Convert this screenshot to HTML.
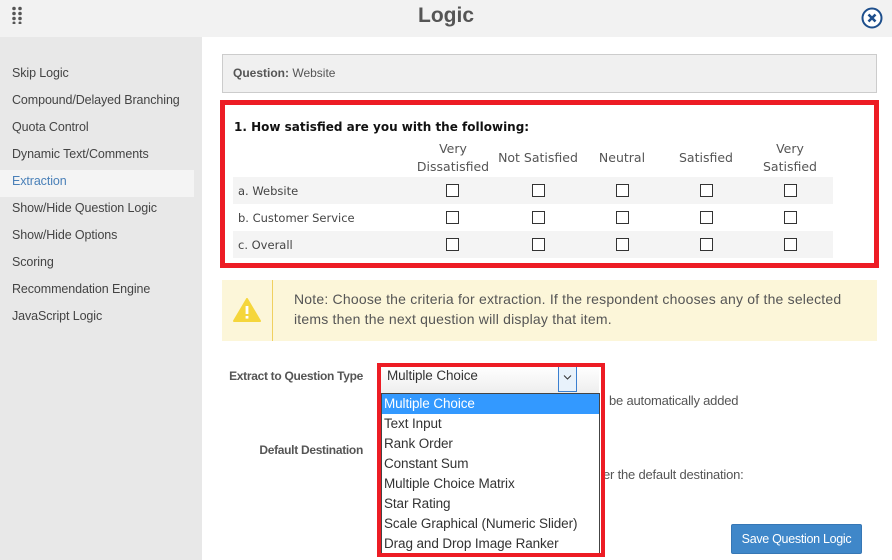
<!DOCTYPE html>
<html><head><meta charset="utf-8"><style>
*{margin:0;padding:0;box-sizing:border-box}
body{width:892px;height:560px;overflow:hidden;background:#fff;font-family:"Liberation Sans",sans-serif;color:#555;position:relative}
.a{position:absolute;white-space:nowrap}
.hdr{left:0;top:0;width:892px;height:37px;background:#f2f2f2}
.side{left:0;top:37px;width:202px;height:523px;background:#e8e8e8}
.si{left:12px;font-size:12.5px;color:#444;letter-spacing:-0.1px}
.cb{position:absolute;width:13px;height:13px;border:1px solid #333;background:#fff}
.row{position:absolute;left:233px;width:600px;height:27px}
.rl{position:absolute;left:5px;top:7px;color:#444;font-family:"DejaVu Sans",sans-serif;font-size:11.5px}
.ch{font-family:"DejaVu Sans",sans-serif;font-size:12.5px;color:#555;text-align:center;line-height:18px}
.opt{position:absolute;left:0;width:217px;height:20px;padding-left:2px;font-size:13.5px;color:#333;line-height:20px;letter-spacing:-0.1px}
</style></head><body>
<div class="a hdr"></div>
<svg class="a" style="left:11px;top:6px" width="12" height="18"><g fill="#555"><circle cx="3" cy="2.5" r="1.8"/><circle cx="9" cy="2.5" r="1.8"/><circle cx="3" cy="7.5" r="1.8"/><circle cx="9" cy="7.5" r="1.8"/><circle cx="3" cy="12.5" r="1.8"/><circle cx="9" cy="12.5" r="1.8"/><circle cx="3" cy="17" r="1.5"/><circle cx="9" cy="17" r="1.5"/></g></svg>
<div class="a" style="left:0;width:892px;top:4px;text-align:center;font-size:21px;font-weight:bold;color:#555">Logic</div>
<svg class="a" style="left:861px;top:7px" width="22" height="22"><circle cx="11" cy="11" r="9.5" fill="#fff" stroke="#1e4f8c" stroke-width="2"/><path d="M7.5 7.5L14.5 14.5M14.5 7.5L7.5 14.5" stroke="#1e4f8c" stroke-width="2.6"/></svg>
<div class="a side"></div>
<div class="a" style="left:0;top:170px;width:194px;height:27px;background:#f4f4f4"></div>
<div class="a si" style="top:66px">Skip Logic</div>
<div class="a si" style="top:93px">Compound/Delayed Branching</div>
<div class="a si" style="top:120px">Quota Control</div>
<div class="a si" style="top:147px">Dynamic Text/Comments</div>
<div class="a si" style="top:174px;color:#4a80b8">Extraction</div>
<div class="a si" style="top:201px">Show/Hide Question Logic</div>
<div class="a si" style="top:228px">Show/Hide Options</div>
<div class="a si" style="top:255px">Scoring</div>
<div class="a si" style="top:282px">Recommendation Engine</div>
<div class="a si" style="top:309px">JavaScript Logic</div>

<div class="a" style="left:222px;top:54px;width:655px;height:39px;background:#f0f0f0;border:1px solid #ccc"></div>
<div class="a" style="left:233px;top:66px;font-size:12px;color:#555"><b>Question:</b> Website</div>

<div class="a" style="left:220px;top:100px;width:659px;height:168px;border:5px solid #ed1c24"></div>
<div class="a" style="left:234px;top:120px;font-family:'DejaVu Sans',sans-serif;font-size:12px;font-weight:bold;color:#111">1. How satisfied are you with the following:</div>
<div class="a ch" style="left:412px;width:82px;top:140px">Very<br>Dissatisfied</div>
<div class="a ch" style="left:494px;width:88px;top:149px">Not Satisfied</div>
<div class="a ch" style="left:582px;width:80px;top:149px">Neutral</div>
<div class="a ch" style="left:666px;width:80px;top:149px">Satisfied</div>
<div class="a ch" style="left:750px;width:80px;top:140px">Very<br>Satisfied</div>
<div class="row" style="top:177px;background:#f4f4f4"><span class="rl">a. Website</span></div>
<div class="row" style="top:204px"><span class="rl">b. Customer Service</span></div>
<div class="row" style="top:231px;background:#f4f4f4"><span class="rl">c. Overall</span></div>
<div class="a" style="left:0;top:0">
<div class="cb" style="left:446px;top:184px"></div><div class="cb" style="left:532px;top:184px"></div><div class="cb" style="left:616px;top:184px"></div><div class="cb" style="left:700px;top:184px"></div><div class="cb" style="left:784px;top:184px"></div>
<div class="cb" style="left:446px;top:211px"></div><div class="cb" style="left:532px;top:211px"></div><div class="cb" style="left:616px;top:211px"></div><div class="cb" style="left:700px;top:211px"></div><div class="cb" style="left:784px;top:211px"></div>
<div class="cb" style="left:446px;top:238px"></div><div class="cb" style="left:532px;top:238px"></div><div class="cb" style="left:616px;top:238px"></div><div class="cb" style="left:700px;top:238px"></div><div class="cb" style="left:784px;top:238px"></div>
</div>

<div class="a" style="left:222px;top:280px;width:655px;height:61px;background:#fcf6d9"></div>
<div class="a" style="left:272px;top:280px;width:1px;height:61px;background:#f0d060"></div>
<svg class="a" style="left:233px;top:298px" width="28" height="24"><path d="M14 1L27 23H1Z" fill="#f5d63c" stroke="#f5d63c" stroke-linejoin="round" stroke-width="2"/><rect x="12.6" y="8" width="2.8" height="8" fill="#fff"/><rect x="12.6" y="18" width="2.8" height="2.6" fill="#fff"/></svg>
<div class="a" style="left:294px;top:289px;font-size:14px;line-height:20px;color:#555;letter-spacing:0.2px">Note: Choose the criteria for extraction. If the respondent chooses any of the selected<br>items then the next question will display that item.</div>

<div class="a" style="left:200px;width:163px;top:369px;text-align:right;font-size:12px;font-weight:bold;color:#555;letter-spacing:-0.3px">Extract to Question Type</div>
<div class="a" style="left:200px;width:163px;top:443px;text-align:right;font-size:12px;font-weight:bold;color:#555;letter-spacing:-0.3px">Default Destination</div>
<div class="a" style="left:609px;top:393px;font-size:13px;color:#555;letter-spacing:-0.2px">be automatically added</div>
<div class="a" style="left:603px;top:467px;font-size:13px;color:#555;letter-spacing:-0.2px">er the default destination:</div>

<div class="a" style="left:381px;top:366px;width:218px;height:27px;background:linear-gradient(#fff,#eee);border-top:1px solid #444"></div>
<div class="a" style="left:387px;top:368px;font-size:13.5px;color:#333;letter-spacing:-0.1px">Multiple Choice</div>
<div class="a" style="left:558px;top:366px;width:19px;height:26px;background:#e8f2fb;border:1px solid #3a7fd0"></div>
<svg class="a" style="left:563px;top:374px" width="9" height="7"><path d="M1 1.5L4.5 5L8 1.5" fill="none" stroke="#333" stroke-width="1"/></svg>
<div class="a" style="left:381px;top:393px;width:219px;height:161px;background:#fff;border:1px solid #444">
<div class="opt" style="top:0;background:#3399ff;color:#fff">Multiple Choice</div>
<div class="opt" style="top:20px">Text Input</div>
<div class="opt" style="top:40px">Rank Order</div>
<div class="opt" style="top:60px">Constant Sum</div>
<div class="opt" style="top:80px">Multiple Choice Matrix</div>
<div class="opt" style="top:100px">Star Rating</div>
<div class="opt" style="top:120px">Scale Graphical (Numeric Slider)</div>
<div class="opt" style="top:140px">Drag and Drop Image Ranker</div>
</div>
<div class="a" style="left:377px;top:363px;width:228px;height:194px;border:4px solid #ed1c24"></div>

<div class="a" style="left:731px;top:524px;width:131px;height:30px;background:#3f87c9;border:1px solid #3677b5;border-radius:2px;color:#fff;font-size:12.5px;text-align:center;line-height:28px;letter-spacing:-0.3px">Save Question Logic</div>
</body></html>
